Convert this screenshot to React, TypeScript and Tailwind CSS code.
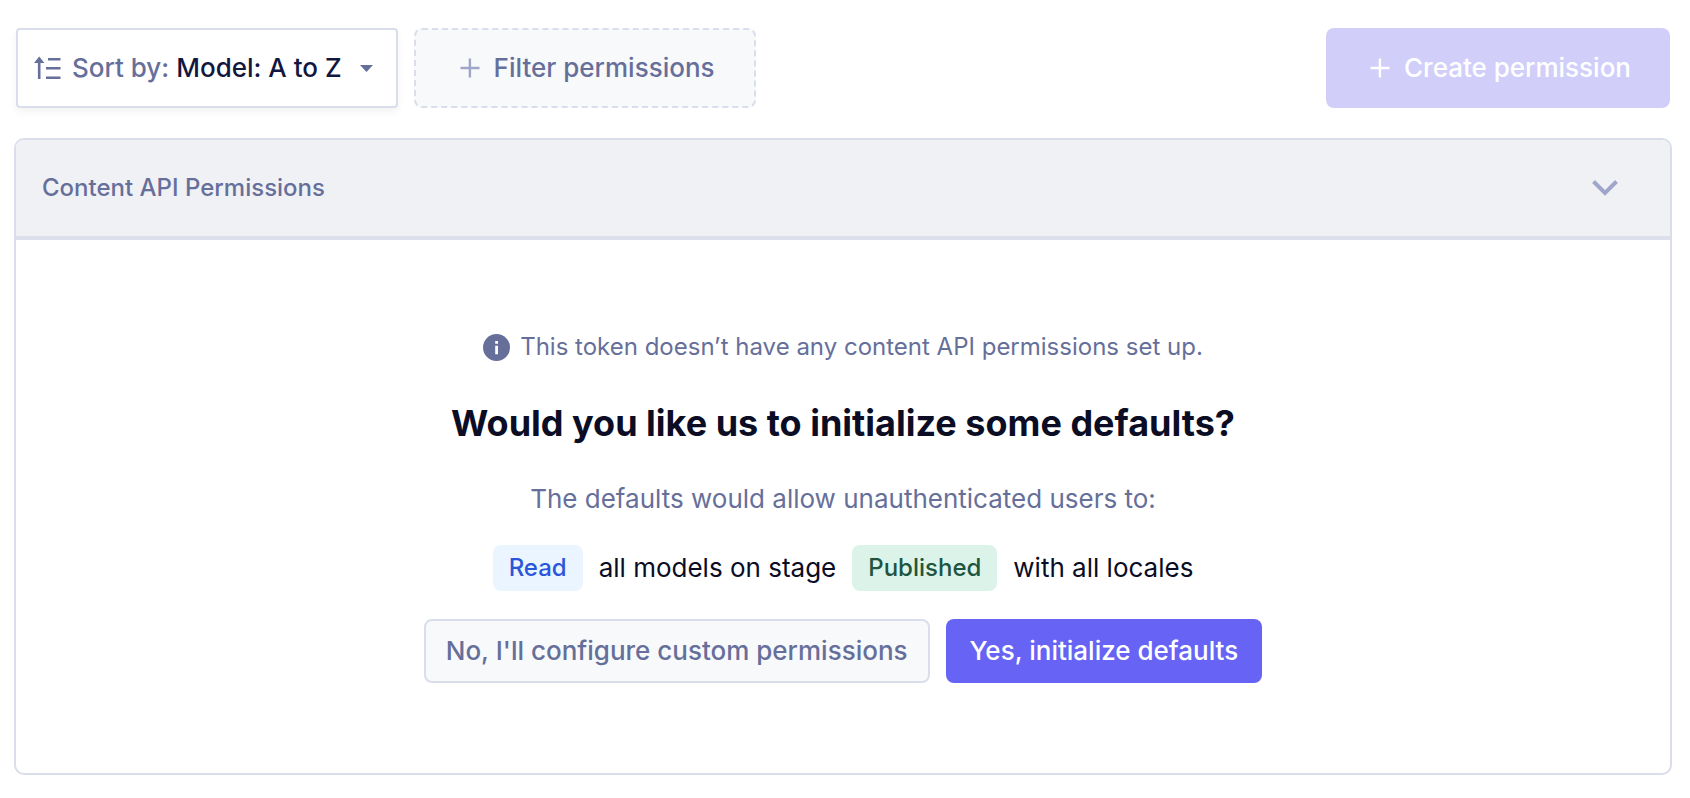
import type { ReactNode } from "react";

function PlusIcon({ className }: { className: string }) {
  return (
    <svg className={className} width="20" height="20" viewBox="0 0 20 20" fill="currentColor" aria-hidden="true">
      <path d="M8.700 .5h2.400v8.300h8.400v2.400h-8.400v8.300H8.700v-8.300H.5V8.800h8.200z" />
    </svg>
  );
}

function SortIcon() {
  return (
    <svg className="shrink-0 text-[#666f9a]" width="27" height="24" viewBox="0 0 27 24" fill="currentColor" aria-hidden="true">
      <path d="M5.200 .5 10.400 7H6.500v16H3.900V7H0z" />
      <path d="M14 2h12.500v2.400H14zM12 11h14.500v2.400H12zM12 20.600h14.500v2.400H12z" />
    </svg>
  );
}

function Badge({ className, children }: { className: string; children: ReactNode }) {
  return <span className={`rounded-lg px-4 py-2 text-2xl leading-[30px] font-medium ${className}`}>{children}</span>;
}

export default function App() {
  return (
    <main className="bg-white pt-7 pr-[18px] pb-5 pl-3.5 font-['Inter',sans-serif] text-[#0a0d24]">
      <div className="flex flex-wrap items-center gap-4 px-0.5">
        <button
          type="button"
          className="flex h-20 items-center rounded border-2 border-[#dadeec] bg-white pr-[23px] pl-4 text-[26px] leading-8 font-medium shadow-[0_4px_8px_rgba(0,0,0,0.05)]"
        >
          <SortIcon />
          <span className="ml-[11px] text-[#666f9a]">Sort by:</span>
          <span className="ml-[7px] text-[#121740]">Model: A to Z</span>
          <svg className="ml-[18px] text-[#666f9a]" width="13" height="7" viewBox="0 0 13 7" fill="currentColor" aria-hidden="true">
            <path d="M0 0h13L6.500 7z" />
          </svg>
        </button>
        <button
          type="button"
          className="flex h-20 items-center gap-3.5 rounded-lg border-2 border-dashed border-[#dadeec] bg-[#f8f9fb] pr-[39px] pl-11 text-[26px] leading-8 font-medium text-[#666f9a]"
        >
          <PlusIcon className="text-[#9fa6c9]" />
          Filter permissions
        </button>
        <button
          type="button"
          disabled
          className="ml-auto flex h-20 items-center gap-3.5 rounded-lg bg-[#d1cffa] pr-[39px] pl-11 text-[26px] leading-8 font-medium text-white"
        >
          <PlusIcon className="text-white" />
          Create permission
        </button>
      </div>

      <section className="mt-[30px] overflow-hidden rounded-[10px] border-2 border-[#dadeec]">
        <h2 className="border-b-4 border-[#dcdfec] bg-[#f0f1f5] text-2xl leading-8 font-medium text-[#666f9a]">
          <button type="button" aria-expanded="true" className="flex h-24 w-full items-center justify-between pr-[52px] pl-[26px]">
            Content API Permissions
            <svg className="text-[#9fa6c9]" width="26" height="16" viewBox="0 0 26 16" fill="none" stroke="currentColor" strokeWidth="4" aria-hidden="true">
              <path d="M1.500 1.500l11.500 11.500L24.500 1.500" />
            </svg>
          </button>
        </h2>

        <div className="flex flex-col items-center px-6 pt-[91px] pb-[90px] text-center">
          <p className="flex items-center gap-2.5 text-2xl leading-8 text-[#666f9a]">
            <svg className="shrink-0" width="27" height="27" viewBox="0 0 27 27" aria-hidden="true">
              <circle cx="13.500" cy="13.500" r="13.500" fill="#666f9a" />
              <path d="M12.200 7h2.800v2.700h-2.800zM12.200 11.800h2.800v8.400h-2.800z" fill="#fff" />
            </svg>
            This token doesn’t have any content API permissions set up.
          </p>
          <h3 className="mt-[38px] text-4xl leading-[44px] font-bold">Would you like us to initialize some defaults?</h3>
          <p className="mt-[38px] text-[26px] leading-8 text-[#666f9a]">The defaults would allow unauthenticated users to:</p>
          <p className="mt-[30px] flex flex-wrap items-center justify-center gap-4 text-[26px] leading-8">
            <Badge className="bg-[#ebf5ff] text-[#2b55db]">Read</Badge>
            <span>all models on stage</span>
            <Badge className="bg-[#dcf3e9] text-[#1f5440]">Published</Badge>
            <span>with all locales</span>
          </p>
          <div className="mt-7 flex flex-wrap justify-center gap-4 text-[26px] leading-8 font-medium">
            <button type="button" className="h-16 rounded-lg border-2 border-[#dadeec] bg-[#f8f9fb] px-5 text-[#666f9a]">
              No, I'll configure custom permissions
            </button>
            <button type="button" className="h-16 rounded-lg bg-[#6663f5] px-6 text-white">
              Yes, initialize defaults
            </button>
          </div>
        </div>
      </section>
    </main>
  );
}
